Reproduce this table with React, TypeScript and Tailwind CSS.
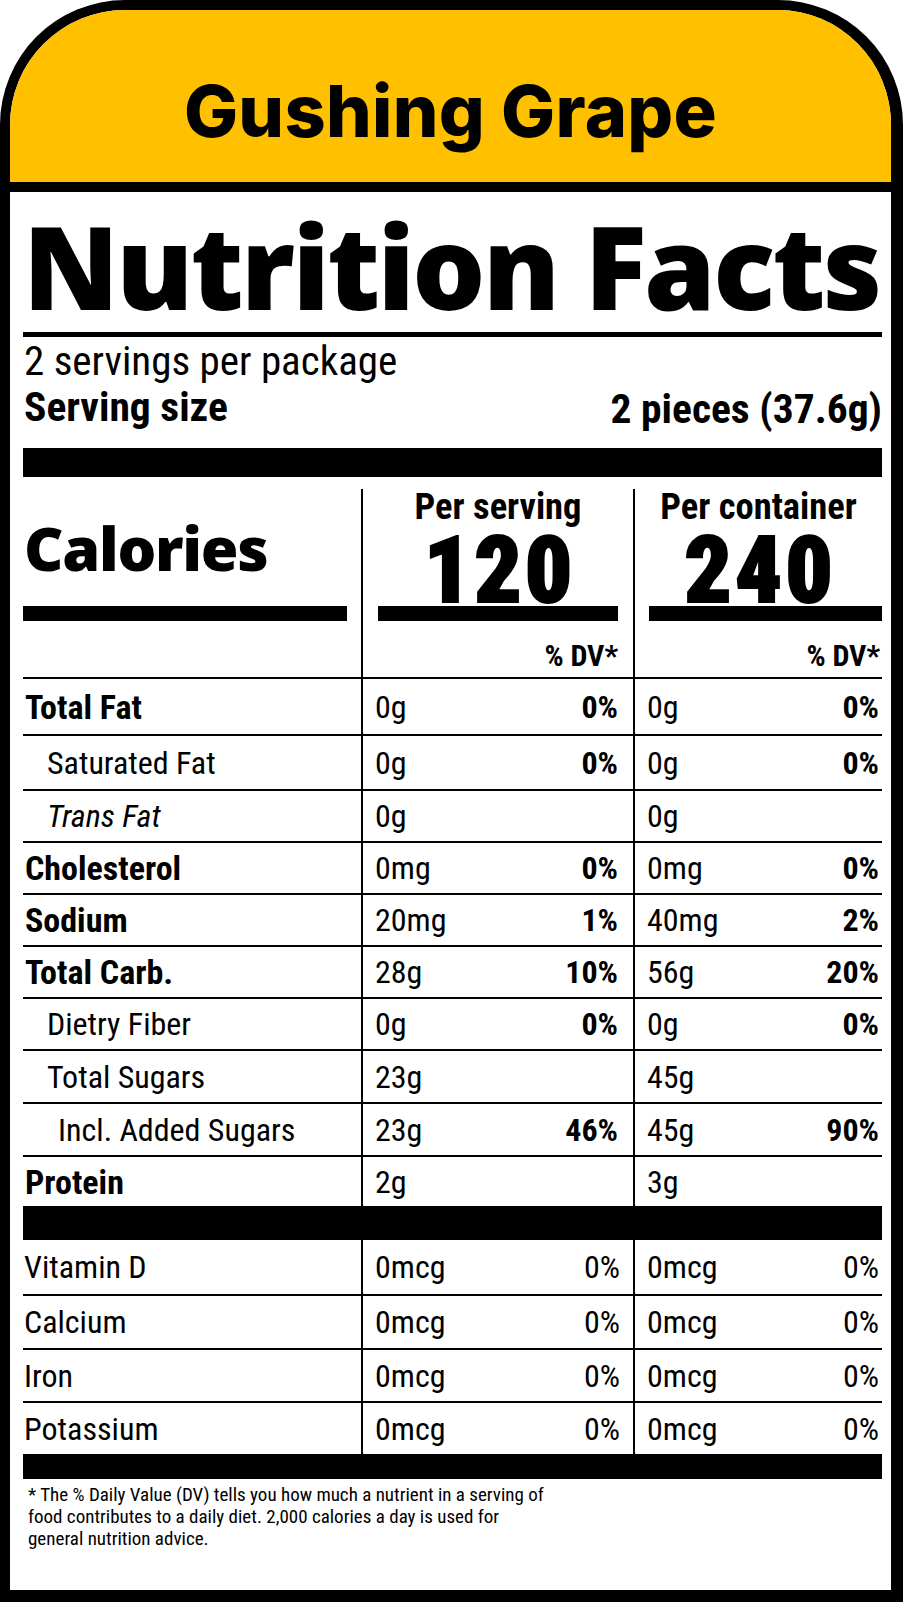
import React from "react";

const fam = "font-['Roboto_Condensed','Roboto',sans-serif] [font-stretch:75%]";

type Row = {
  label: string;
  labelCls: string;
  s: string;
  sd: string;
  c: string;
  cd: string;
  h: string;
};

const rows: Row[] = [
  { label: "Total Fat", labelCls: "font-bold text-[34px] leading-[34px] pl-[2px]", s: "0g", sd: "0%", c: "0g", cd: "0%", h: "h-[57px]" },
  { label: "Saturated Fat", labelCls: "pl-[24px]", s: "0g", sd: "0%", c: "0g", cd: "0%", h: "h-[55px]" },
  { label: "Trans Fat", labelCls: "italic pl-[24px]", s: "0g", sd: "", c: "0g", cd: "", h: "h-[52px]" },
  { label: "Cholesterol", labelCls: "font-bold text-[34px] leading-[34px] pl-[2px]", s: "0mg", sd: "0%", c: "0mg", cd: "0%", h: "h-[52px]" },
  { label: "Sodium", labelCls: "font-bold text-[34px] leading-[34px] pl-[2px]", s: "20mg", sd: "1%", c: "40mg", cd: "2%", h: "h-[52px]" },
  { label: "Total Carb.", labelCls: "font-bold text-[34px] leading-[34px] pl-[2px]", s: "28g", sd: "10%", c: "56g", cd: "20%", h: "h-[52px]" },
  { label: "Dietry Fiber", labelCls: "pl-[24px]", s: "0g", sd: "0%", c: "0g", cd: "0%", h: "h-[52px]" },
  { label: "Total Sugars", labelCls: "pl-[24px]", s: "23g", sd: "", c: "45g", cd: "", h: "h-[53px]" },
  { label: "Incl. Added Sugars", labelCls: "pl-[35px]", s: "23g", sd: "46%", c: "45g", cd: "90%", h: "h-[53px]" },
  { label: "Protein", labelCls: "font-bold text-[34px] leading-[34px] pl-[2px]", s: "2g", sd: "", c: "3g", cd: "", h: "h-[51px]" },
];

const minerals = [
  { label: "Vitamin D", h: "h-[54px]", top: false },
  { label: "Calcium", h: "h-[54px]", top: true },
  { label: "Iron", h: "h-[53px]", top: true },
  { label: "Potassium", h: "h-[53px]", top: true },
];

function NutrientRow({ r }: { r: Row }) {
  return (
    <div className={`flex border-t-2 border-black ${r.h} text-[32px] leading-[32px] ${fam}`}>
      <div className={`w-[338px] flex items-center ${r.labelCls}`}>{r.label}</div>
      <div className="w-[272px] border-l-2 border-black flex items-center justify-between pl-[12px] pr-[15px]">
        <span>{r.s}</span>
        <span className="font-bold">{r.sd}</span>
      </div>
      <div className="flex-1 border-l-2 border-black flex items-center justify-between pl-[12px] pr-[3px]">
        <span>{r.c}</span>
        <span className="font-bold">{r.cd}</span>
      </div>
    </div>
  );
}

export default function App() {
  return (
    <div className="w-[903px] h-[1602px] bg-white text-black">
      <div className="h-full flex flex-col border-t-[10px] border-l-[10px] border-r-[12px] border-b-[12px] border-black rounded-t-[125px] overflow-hidden bg-white">
        <div className="h-[172px] shrink-0 bg-[#FFC000] flex justify-center pt-[64px]">
          <span className="font-['Inter',sans-serif] font-extrabold text-[72px] leading-[73px] tracking-[0.3px]">
            Gushing Grape
          </span>
        </div>
        <div className="h-[10px] shrink-0 bg-black" />
        <div className="flex-1 flex flex-col pl-[13px] pr-[9px]">
          <div className="pt-[16px] font-['Open_Sans',sans-serif] font-extrabold text-[115px] leading-[115px] tracking-[-2.6px] whitespace-nowrap">
            Nutrition Facts
          </div>
          <div className="mt-[9px] h-[5px] bg-black" />
          <div className={`mt-[4px] text-[41px] leading-[40px] pl-[1px] ${fam}`}>2 servings per package</div>
          <div className={`mt-[6px] flex justify-between items-end text-[41.5px] leading-[40px] font-bold pl-[1px] ${fam}`}>
            <span>Serving size</span>
            <span className="translate-y-[2px]">2 pieces (37.6g)</span>
          </div>
          <div className="mt-[21px] h-[29px] bg-black" />

          {/* Calories block */}
          <div className="mt-[12px] flex h-[188px]">
            <div className="w-[338px] flex flex-col">
              <div className="mt-[28px] pl-[1px] font-['Open_Sans',sans-serif] font-extrabold text-[61px] leading-[62px] tracking-[-1.3px]">
                Calories
              </div>
              <div className="mt-[27px] mr-[14px] h-[15px] bg-black" />
            </div>
            <div className={`w-[272px] border-l-2 border-black flex flex-col ${fam}`}>
              <div className="text-center font-bold text-[36.5px] leading-[36px]">Per serving</div>
              <div className="mt-[10px] pl-[3px] text-center font-black text-[93px] leading-[71px] tracking-[3px] [-webkit-text-stroke:2px_black]">
                120
              </div>
              <div className="mx-[15px] h-[15px] bg-black" />
              <div className="h-[56px] flex items-end justify-end pb-[6px] pr-[15px] font-bold text-[30px] leading-[30px]">
                % DV*
              </div>
            </div>
            <div className={`flex-1 border-l-2 border-black flex flex-col ${fam}`}>
              <div className="text-center font-bold text-[36.5px] leading-[36px]">Per container</div>
              <div className="mt-[10px] pl-[3px] text-center font-black text-[93px] leading-[71px] tracking-[3px] [-webkit-text-stroke:2px_black]">
                240
              </div>
              <div className="ml-[14px] h-[15px] bg-black" />
              <div className="h-[56px] flex items-end justify-end pb-[6px] pr-[2px] font-bold text-[30px] leading-[30px]">
                % DV*
              </div>
            </div>
          </div>

          {rows.map((r) => (
            <NutrientRow key={r.label} r={r} />
          ))}

          <div className="h-[34px] bg-black" />

          {minerals.map((m) => (
            <div
              key={m.label}
              className={`flex ${m.top ? "border-t-2 border-black" : ""} ${m.h} text-[32px] leading-[32px] ${fam}`}
            >
              <div className="w-[338px] flex items-center pl-[1px]">{m.label}</div>
              <div className="w-[272px] border-l-2 border-black flex items-center justify-between pl-[12px] pr-[13px]">
                <span>0mcg</span>
                <span>0%</span>
              </div>
              <div className="flex-1 border-l-2 border-black flex items-center justify-between pl-[12px] pr-[3px]">
                <span>0mcg</span>
                <span>0%</span>
              </div>
            </div>
          ))}

          <div className="h-[25px] bg-black" />

          <div className={`mt-[5px] pl-[5px] text-[19px] leading-[22px] ${fam}`}>
            * The % Daily Value (DV) tells you how much a nutrient in a serving of
            <br />
            food contributes to a daily diet. 2,000 calories a day is used for
            <br />
            general nutrition advice.
          </div>
        </div>
      </div>
    </div>
  );
}
